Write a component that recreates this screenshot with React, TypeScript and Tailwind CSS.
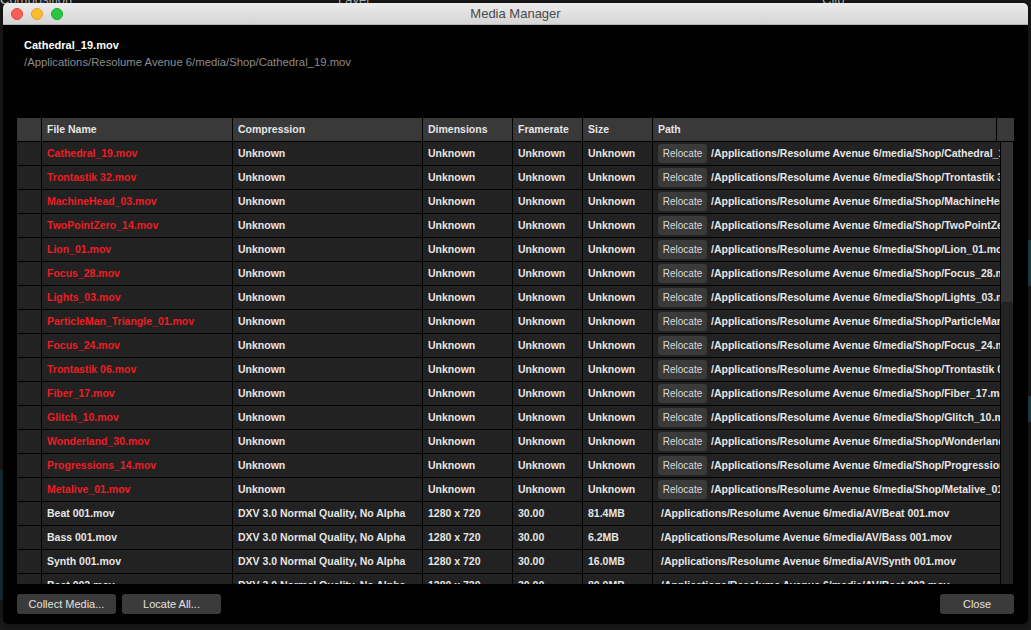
import React from "react";

interface MediaRow {
  name: string;
  compression: string;
  dimensions: string;
  framerate: string;
  size: string;
  path: string;
  missing: boolean;
}

const shop = "/Applications/Resolume Avenue 6/media/Shop/";
const av = "/Applications/Resolume Avenue 6/media/AV/";

const missingNames = [
  "Cathedral_19.mov",
  "Trontastik 32.mov",
  "MachineHead_03.mov",
  "TwoPointZero_14.mov",
  "Lion_01.mov",
  "Focus_28.mov",
  "Lights_03.mov",
  "ParticleMan_Triangle_01.mov",
  "Focus_24.mov",
  "Trontastik 06.mov",
  "Fiber_17.mov",
  "Glitch_10.mov",
  "Wonderland_30.mov",
  "Progressions_14.mov",
  "Metalive_01.mov",
];

const found: [string, string][] = [
  ["Beat 001.mov", "81.4MB"],
  ["Bass 001.mov", "6.2MB"],
  ["Synth 001.mov", "16.0MB"],
  ["Beat 002.mov", "80.0MB"],
];

const rows: MediaRow[] = [
  ...missingNames.map((name) => ({
    name,
    compression: "Unknown",
    dimensions: "Unknown",
    framerate: "Unknown",
    size: "Unknown",
    path: shop + name,
    missing: true,
  })),
  ...found.map(([name, size]) => ({
    name,
    compression: "DXV 3.0 Normal Quality, No Alpha",
    dimensions: "1280 x 720",
    framerate: "30.00",
    size,
    path: av + name,
    missing: false,
  })),
];

const font = { fontFamily: '"Liberation Sans", Arial, sans-serif' };

const cell = "border-r border-black pl-[5px] flex items-center overflow-hidden whitespace-nowrap";

const App = () => {
  return (
    <div className="relative w-[1031px] h-[630px] bg-[#1b1b1b] overflow-hidden" style={font}>
      {/* app behind the window */}
      <div className="flex h-[20px] text-[13px] text-[#cfcfcf] leading-[8px] -mt-[4px]">
        <span className="w-[338px]">Composition</span>
        <span className="w-[484px]">Layer</span>
        <span>Clip</span>
      </div>
      <div className="absolute right-0 top-[240px] w-[4px] h-[46px] bg-[#1f4a55]" />
      <div className="absolute right-0 top-[396px] w-[4px] h-[26px] bg-[#1f4a55]" />
      <div className="absolute left-0 top-[470px] w-[3px] h-[130px] bg-[#16343c]" />

      {/* window */}
      <div className="absolute left-[3px] top-[3px] w-[1025px] h-[621px] rounded-[5px] overflow-hidden flex flex-col shadow-[0_0_8px_rgba(0,0,0,0.6)]">
        <div className="relative h-[22px] shrink-0 bg-gradient-to-b from-[#ececec] to-[#d5d5d5] border-b border-[#b2b2b2] flex items-center justify-center">
          <div className="absolute left-[8px] top-[5px] flex gap-[8px]">
            <span className="w-[12px] h-[12px] rounded-full bg-[#fc5f57] border border-[#e0443e]" />
            <span className="w-[12px] h-[12px] rounded-full bg-[#fdbc2e] border border-[#dea123]" />
            <span className="w-[12px] h-[12px] rounded-full bg-[#28c840] border border-[#1aab29]" />
          </div>
          <span className="text-[13px] text-[#4a4a4a] leading-[14px]">Media Manager</span>
        </div>

        <div className="flex-1 bg-black flex flex-col px-[14px] pt-[13px]">
          <div className="pl-[7px]">
            <div className="text-[11px] font-bold text-white leading-[14px]">Cathedral_19.mov</div>
            <div className="text-[11.3px] text-[#8c8c8c] leading-[14px] mt-[3px]">
              /Applications/Resolume Avenue 6/media/Shop/Cathedral_19.mov
            </div>
          </div>

          <div className="mt-[49px] h-[466px] flex flex-col overflow-hidden text-[10.5px] font-bold text-[#e6e6e6]">
            <div className="grid grid-cols-[25px_191px_190px_90px_70px_70px_344px_16px] h-[24px] shrink-0 bg-[#393939] border-b border-black">
              <div className="border-r border-black" />
              <div className={cell}>File Name</div>
              <div className={cell}>Compression</div>
              <div className={cell}>Dimensions</div>
              <div className={cell}>Framerate</div>
              <div className={cell}>Size</div>
              <div className={cell}>Path</div>
              <div />
            </div>
            <div className="flex flex-1 overflow-hidden">
              <div className="w-[984px] shrink-0 flex flex-col">
                {rows.map((r) => (
                  <div
                    key={r.name}
                    className="grid grid-cols-[25px_191px_190px_90px_70px_70px_348px] h-[24px] shrink-0 bg-[#222222] border-b border-black"
                  >
                    <div className="border-r border-black" />
                    <div className={`${cell} ${r.missing ? "text-[#ee1c25]" : ""}`}>{r.name}</div>
                    <div className={cell}>{r.compression}</div>
                    <div className={cell}>{r.dimensions}</div>
                    <div className={cell}>{r.framerate}</div>
                    <div className={cell}>{r.size}</div>
                    <div className={`${cell} gap-[4px] pl-[2px]`}>
                      {r.missing && (
                        <span className="shrink-0 w-[49px] h-[19px] rounded-[3px] bg-[#3a3a3a] text-[10px] font-normal text-[#dcdcdc] flex items-center justify-center">
                          Relocate
                        </span>
                      )}
                      <span className={r.missing ? "" : "pl-[3px]"}>{r.path}</span>
                    </div>
                  </div>
                ))}
              </div>
              <div className="w-[12px] bg-[#222222] flex flex-col">
                <div className="h-[160px] bg-[#333333]" />
              </div>
            </div>
          </div>

          <div className="mt-[10px] flex items-center text-[11px] text-[#e2e2e2]">
            <button className="w-[99px] h-[20px] rounded-[3px] bg-[#3b3b3b] leading-[20px]">Collect Media...</button>
            <button className="ml-[6px] w-[99px] h-[20px] rounded-[3px] bg-[#3b3b3b] leading-[20px]">Locate All...</button>
            <button className="ml-auto w-[74px] h-[20px] rounded-[3px] bg-[#3b3b3b] leading-[20px]">Close</button>
          </div>
        </div>
      </div>
    </div>
  );
};

export default App;
